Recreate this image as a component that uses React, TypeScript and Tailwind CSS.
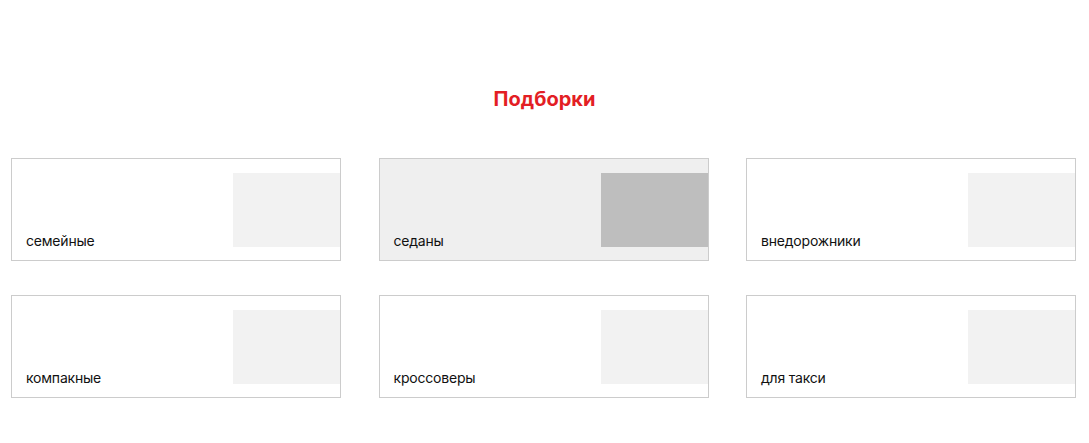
const collections = [
  { title: "семейные" },
  { title: "седаны", active: true },
  { title: "внедорожники" },
  { title: "компакные" },
  { title: "кроссоверы" },
  { title: "для такси" },
]

export default function App() {
  return (
    <div className="min-h-[443px] bg-white font-['Inter',sans-serif] text-[#111111]">
      <h2 className="pt-[87px] text-center text-[20px] font-bold leading-[24px] text-[#e31e24]">
        Подборки
      </h2>

      <div className="mt-[47px] grid grid-cols-3 gap-x-[37.5px] gap-y-[34px] pl-[11px] pr-[13px]">
        {collections.map((item) => (
          <a
            key={item.title}
            href="#"
            className={`flex h-[103px] border border-[#cccccc] ${
              item.active ? "bg-[#efefef]" : "bg-white"
            }`}
          >
            <div className="flex flex-1 items-end pb-[11px] pl-[14px]">
              <span className="text-[14px] leading-[17px] tracking-[-0.2px]">{item.title}</span>
            </div>
            <div className="flex items-center">
              <div
                className={`h-[74px] w-[107px] ${
                  item.active ? "bg-[#bebebe]" : "bg-[#f2f2f2]"
                }`}
              />
            </div>
          </a>
        ))}
      </div>
    </div>
  )
}
